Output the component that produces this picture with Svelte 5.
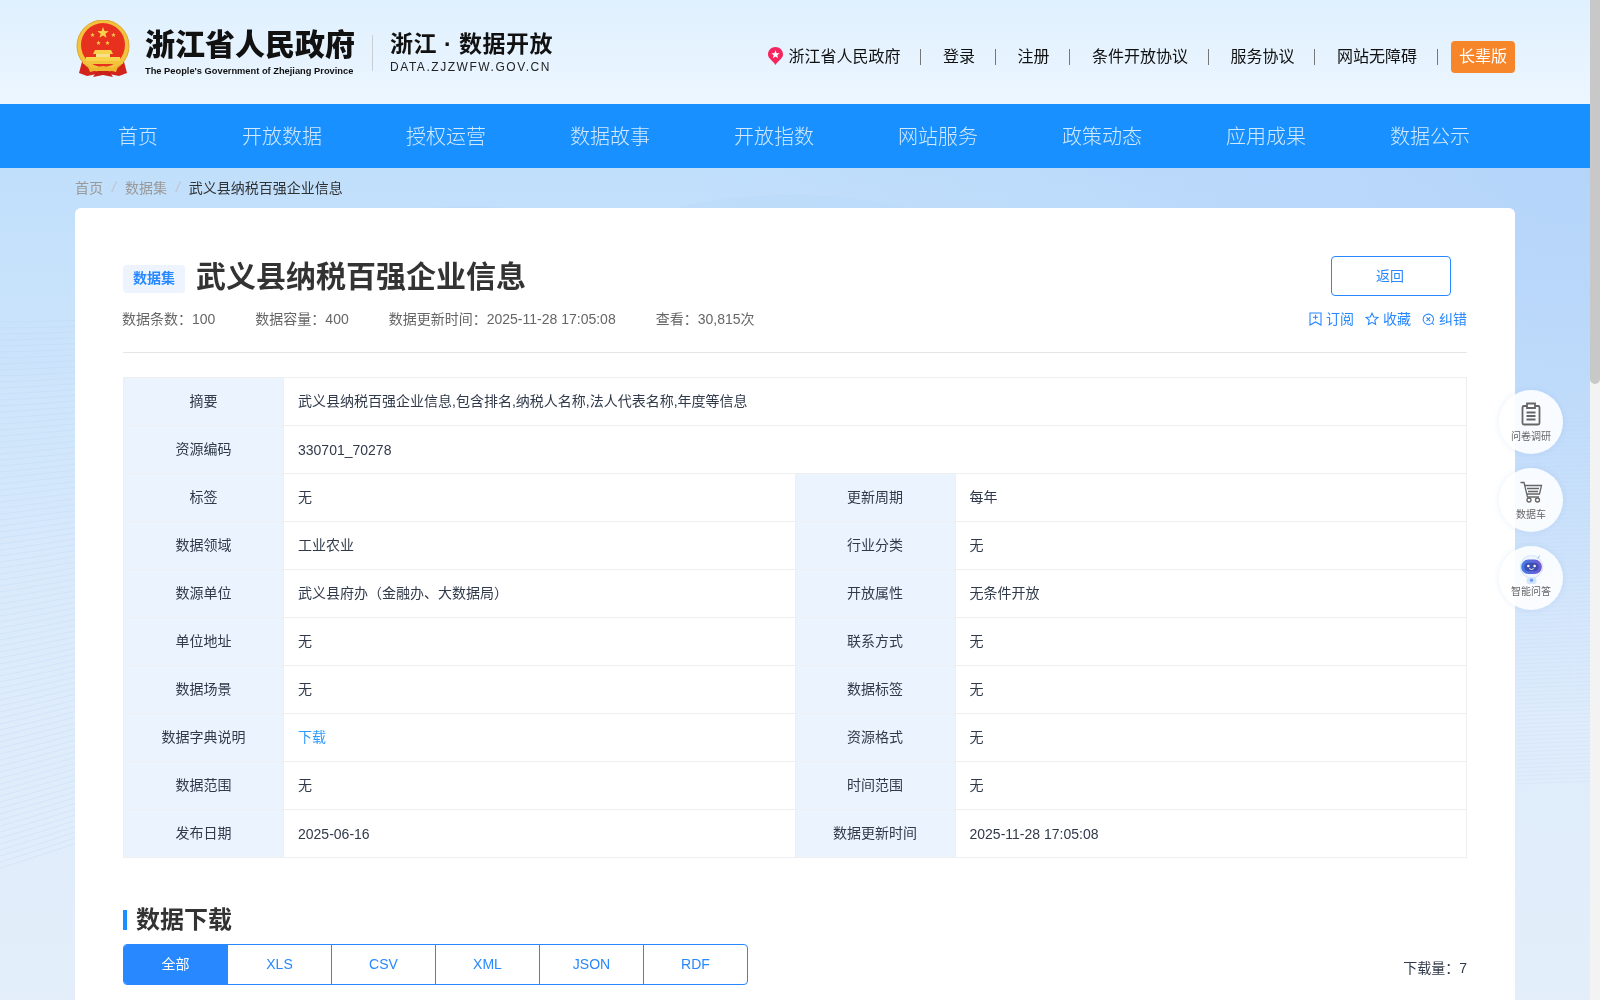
<script>
  const topLinks = ['登录', '注册', '条件开放协议', '服务协议', '网站无障碍'];
  const navItems = ['首页', '开放数据', '授权运营', '数据故事', '开放指数', '网站服务', '政策动态', '应用成果', '数据公示'];
  const rows = [
    ['标签', '无', '更新周期', '每年'],
    ['数据领域', '工业农业', '行业分类', '无'],
    ['数源单位', '武义县府办（金融办、大数据局）', '开放属性', '无条件开放'],
    ['单位地址', '无', '联系方式', '无'],
    ['数据场景', '无', '数据标签', '无'],
    ['数据字典说明', '下载', '资源格式', '无'],
    ['数据范围', '无', '时间范围', '无'],
    ['发布日期', '2025-06-16', '数据更新时间', '2025-11-28 17:05:08']
  ];
  const tabs = ['全部', 'XLS', 'CSV', 'XML', 'JSON', 'RDF'];
  const waves = Array.from({ length: 92 }, (_, i) => i);
  const isLatin = (s) => /^\d/.test(s);
  const star = (cx, cy, r) =>
    Array.from({ length: 10 }, (_, i) => {
      const a = -Math.PI / 2 + (i * Math.PI) / 5;
      const d = i % 2 ? r * 0.42 : r;
      return `${(cx + d * Math.cos(a)).toFixed(2)},${(cy + d * Math.sin(a)).toFixed(2)}`;
    }).join(' ');
</script>

<div class="backdrop" aria-hidden="true">
  <svg viewBox="0 0 1600 1000" width="1600" height="1000" preserveAspectRatio="none">
    {#each waves as i}
      <path d={`M0 ${322 + i * 6} C 30 ${322 + i * 5.9} 60 ${321 + i * 5.8} 90 ${320 + i * 5.7}`} class="w" />
      <path d={`M1515 ${420 + i * 4} C 1540 ${419 + i * 4} 1570 ${418 + i * 4} 1600 ${417 + i * 4}`} class="w r" />
    {/each}
    <ellipse cx="470" cy="236" rx="110" ry="30" class="hill" />
    <ellipse cx="790" cy="245" rx="170" ry="50" class="hill" />
  </svg>
</div>

<div class="page">
  <header class="masthead">
    <div class="wrap top">
      <div class="brand">
        <svg class="emblem" viewBox="0 0 56 58" width="56" height="58">
          <path d="M8 38 L4 53 L12 56 L22 54 L34 54 L44 56 L52 53 L48 38 Z" fill="#d3241c" />
          <circle cx="28" cy="26" r="26" fill="#f3c33d" />
          <circle cx="28" cy="26" r="26" fill="none" stroke="#e0a52a" stroke-width="1" />
          <circle cx="28" cy="25" r="22" fill="#e8301f" />
          <g fill="#f7d24a">
            <polygon points={star(28, 13, 6)} />
            <polygon points={star(17.5, 15, 2.4)} />
            <polygon points={star(38.5, 15, 2.4)} />
            <polygon points={star(23.5, 23, 2.4)} />
            <polygon points={star(32.5, 23, 2.4)} />
          </g>
          <path d="M20 30 H36 L38 34 H18 Z" fill="#f7d24a" />
          <rect x="21" y="34" width="14" height="3" fill="#f7e08a" />
          <rect x="11" y="37" width="34" height="4" fill="#f7d24a" />
          <rect x="8" y="41" width="40" height="3" fill="#f3c33d" />
          <path d="M12 44 C18 50 22 47 28 46 C34 47 38 50 44 44 L41 52 L33 50 L28 54 L23 50 L15 52 Z" fill="#efb92f" />
          <path d="M22 51 L18 57 L28 55 L38 57 L34 51 Z" fill="#c9201a" />
        </svg>
        <div class="gov">
          <div class="gov-cn">浙江省人民政府</div>
          <div class="gov-en">The People's Government of Zhejiang Province</div>
        </div>
        <span class="brand-rule"></span>
        <div class="portal">
          <div class="portal-cn">浙江 · 数据开放</div>
          <div class="portal-en">DATA.ZJZWFW.GOV.CN</div>
        </div>
      </div>
      <nav class="links">
        <svg class="pin" viewBox="0 0 16 19" width="15" height="18">
          <path d="M8 0 C12.4 0 16 3.4 16 7.8 C16 12 11 14 8 19 C5 14 0 12 0 7.8 C0 3.4 3.6 0 8 0 Z" fill="#f5265f" />
          <polygon points="8,3.4 9.2,6.5 12.4,6.5 9.9,8.6 10.8,11.8 8,10 5.2,11.8 6.1,8.6 3.6,6.5 6.8,6.5" fill="#fff" />
        </svg>
        <span class="link region">浙江省人民政府</span>
        {#each topLinks as l}
          <span class="sep"></span>
          <span class="link">{l}</span>
        {/each}
        <span class="sep last"></span>
        <span class="elder">长辈版</span>
      </nav>
    </div>
  </header>

  <div class="nav">
    <div class="wrap nav-in">
      {#each navItems as n}<span>{n}</span>{/each}
    </div>
  </div>

  <div class="wrap">
    <div class="crumbs">
      <span class="c">首页</span><i>/</i><span class="c">数据集</span><i>/</i><span class="cur">武义县纳税百强企业信息</span>
    </div>

    <main class="card">
      <div class="title-row">
        <span class="tag">数据集</span>
        <h1>武义县纳税百强企业信息</h1>
        <button class="back">返回</button>
      </div>
      <div class="meta-row">
        <div class="meta">
          <span>数据条数：100</span>
          <span>数据容量：400</span>
          <span>数据更新时间：2025-11-28 17:05:08</span>
          <span>查看：30,815次</span>
        </div>
        <div class="acts">
          <span>
            <svg viewBox="0 0 13 14" width="13" height="14"><path d="M1 1 H12 V13 L6.5 10 L1 13 Z M4 5.2 H9 M6.5 2.8 V7.6" /></svg>
            订阅
          </span>
          <span>
            <svg viewBox="0 0 14 14" width="14" height="14"><path d="M7 1.2 L8.8 5 L12.8 5.5 L9.8 8.2 L10.6 12.4 L7 10.3 L3.4 12.4 L4.2 8.2 L1.2 5.5 L5.2 5 Z" /></svg>
            收藏
          </span>
          <span>
            <svg viewBox="0 0 14 14" width="13" height="13"><circle cx="6.8" cy="6.8" r="5.6" /><path d="M4.8 4.8 L8.8 8.8 M8.8 4.8 L4.8 8.8 M11 11 L12.8 12.6" /></svg>
            纠错
          </span>
        </div>
      </div>

      <table class="info">
        <colgroup><col class="k" /><col /><col class="k" /><col /></colgroup>
        <tbody>
          <tr><th>摘要</th><td colspan="3">武义县纳税百强企业信息,包含排名,纳税人名称,法人代表名称,年度等信息</td></tr>
          <tr><th>资源编码</th><td colspan="3" class="num">330701_70278</td></tr>
          {#each rows as r}
            <tr>
              <th>{r[0]}</th>
              <td class:dl={r[1] === '下载'} class:num={isLatin(r[1])}>{r[1]}</td>
              <th>{r[2]}</th>
              <td class:num={isLatin(r[3])}>{r[3]}</td>
            </tr>
          {/each}
        </tbody>
      </table>

      <h2>数据下载</h2>
      <div class="dl-row">
        <div class="tabs">
          {#each tabs as t, i}<span class="tab" class:on={i === 0}>{t}</span>{/each}
        </div>
        <span class="count">下载量：7</span>
      </div>
    </main>
  </div>
</div>

<div class="scrollbar" aria-hidden="true"><span></span></div>

<aside class="float">
  <div class="fab">
    <svg viewBox="0 0 24 24" width="24" height="24">
      <path d="M5 4 H19 A1.5 1.5 0 0 1 20.5 5.5 V21 A1.5 1.5 0 0 1 19 22.5 H5 A1.5 1.5 0 0 1 3.5 21 V5.5 A1.5 1.5 0 0 1 5 4 Z" class="ic" />
      <path d="M8 1.5 H16 V6 H8 Z" class="ic fill" />
      <path d="M7.5 10.5 H16.5 M7.5 14 H16.5 M7.5 17.5 H16.5" class="ic" />
    </svg>
    <small>问卷调研</small>
  </div>
  <div class="fab">
    <svg viewBox="0 0 24 24" width="24" height="24">
      <path d="M1.5 2.5 H5 L8.5 17 H20" class="ic thin" />
      <path d="M6 5.5 H22.5 L20.5 14 H8" class="ic thin" />
      <path d="M8 8.5 H20 M9 11.5 H19" class="ic thin" />
      <circle cx="10" cy="20" r="2" class="ic thin" />
      <circle cx="18.5" cy="20" r="2" class="ic thin" />
    </svg>
    <small>数据车</small>
  </div>
  <div class="fab bot">
    <svg viewBox="0 0 30 32" width="27" height="29">
      <defs>
        <linearGradient id="head" x1="0" x2="1" y1="0" y2="0">
          <stop offset="0" stop-color="#3f7fe6" />
          <stop offset="1" stop-color="#7a55d4" />
        </linearGradient>
      </defs>
      <circle cx="15" cy="13" r="12.5" fill="#f1f6fe" stroke="#cfdff8" />
      <rect x="3.5" y="5" width="23" height="16" rx="8" fill="url(#head)" />
      <rect x="7" y="8.5" width="16" height="9.5" rx="4.7" fill="#3c4fb0" />
      <circle cx="11.5" cy="12" r="1.4" fill="#fff" />
      <circle cx="18.5" cy="12" r="1.4" fill="#fff" />
      <path d="M12.5 15 Q15 17 17.5 15" stroke="#fff" fill="none" />
      <path d="M24 0.5 L22 4" stroke="#8cb4f2" />
      <rect x="9.5" y="25" width="11" height="7" rx="3" fill="#d5e4fb" />
      <circle cx="15" cy="28" r="2" fill="#6ea3f2" />
    </svg>
    <small>智能问答</small>
  </div>
</aside>

<style>
  :global(body) {
    margin: 0;
    font-family: "Liberation Sans", "Noto Sans CJK SC", sans-serif;
    color: #303133;
    background-color: #e3eefa;
    background-image:
      radial-gradient(900px 560px at 100% 160px, #b5d4fa 0%, rgba(181, 212, 250, 0) 100%),
      linear-gradient(180deg, #c0dffb 168px, #dcebfb 620px, #e3eefa 1000px);
    background-attachment: fixed;
  }
  .backdrop {
    position: fixed;
    inset: 0;
    pointer-events: none;
  }
  .w {
    fill: none;
    stroke: #b4d2f8;
    stroke-width: 1;
    opacity: 0.25;
  }
  .w.r {
    opacity: 0.15;
  }
  .hill {
    fill: #b6d7f9;
    opacity: 0.35;
  }
  .scrollbar {
    position: fixed;
    top: 0;
    right: 0;
    bottom: 0;
    width: 10px;
    background: #f3f3f3;
  }
  .scrollbar span {
    display: block;
    height: 384px;
    background: #c8c8c8;
    border-radius: 0 0 5px 5px;
  }
  .page {
    position: relative;
    width: calc(100% - 10px);
    min-height: 2604px;
  }
  .wrap {
    width: 1440px;
    margin: 0 auto;
  }
  .masthead {
    height: 104px;
    background: linear-gradient(180deg, #dff0fe, #ecf6ff);
  }
  .top {
    display: flex;
    justify-content: space-between;
    height: 104px;
  }
  .brand {
    display: flex;
    align-items: flex-start;
  }
  .emblem {
    margin-top: 20px;
    flex: none;
  }
  .gov {
    margin: 24px 0 0 14px;
    width: 212px;
  }
  .gov-cn {
    font-size: 30px;
    font-weight: 900;
    line-height: 42px;
    color: #111;
    white-space: nowrap;
  }
  .gov-en {
    font-size: 9.3px;
    font-weight: 700;
    line-height: 12px;
    color: #111;
    white-space: nowrap;
    margin-top: -1px;
  }
  .brand-rule {
    width: 1px;
    height: 36px;
    background: #c8ced4;
    margin: 35px 17px 0 15px;
  }
  .portal {
    margin-top: 28px;
  }
  .portal-cn {
    font-size: 23px;
    font-weight: 700;
    line-height: 32px;
    letter-spacing: 0.5px;
    color: #111;
    white-space: nowrap;
  }
  .portal-en {
    font-size: 12px;
    line-height: 14px;
    letter-spacing: 1.55px;
    color: #222;
    margin-top: 0;
    white-space: nowrap;
  }
  .links {
    display: flex;
    align-items: center;
    height: 32px;
    margin-top: 41px;
    font-size: 16px;
    color: #111;
  }
  .link {
    margin-bottom: 4px;
  }
  .pin {
    margin-right: 5px;
    margin-top: -2px;
  }
  .sep {
    width: 1px;
    height: 16px;
    background: #777;
    margin: 0 21.5px 0 20px;
  }
  .sep.last {
    margin-right: 13px;
  }
  .elder {
    width: 64px;
    height: 32px;
    line-height: 32px;
    text-align: center;
    background: #f7852a;
    color: #fff;
    border-radius: 4px;
  }
  .nav {
    height: 64px;
    background: #1890ff;
  }
  .nav-in {
    box-sizing: border-box;
    display: flex;
    justify-content: space-around;
    align-items: center;
    height: 64px;
    padding: 0 3px 2px 1px;
    font-size: 20px;
    font-weight: 300;
    color: #d2e9ff;
  }
  .crumbs {
    display: flex;
    align-items: center;
    height: 40px;
    padding-bottom: 3px;
    box-sizing: border-box;
    font-size: 14px;
  }
  .crumbs .c {
    color: #999;
  }
  .crumbs i {
    margin: 0 9px;
    color: #c0c4cc;
  }
  .crumbs .cur {
    color: #303133;
  }
  .card {
    box-sizing: border-box;
    min-height: 2356px;
    background: #fff;
    border-radius: 6px;
    padding: 48px;
  }
  .title-row {
    display: flex;
    align-items: center;
    height: 40px;
  }
  .tag {
    width: 62px;
    height: 28px;
    line-height: 27px;
    margin-top: 5px;
    text-align: center;
    font-size: 14px;
    font-weight: 700;
    color: #2888ff;
    background: #edf4fe;
    border-radius: 4px;
  }
  h1 {
    margin: 0 0 4px 11px;
    font-size: 30px;
    font-weight: 700;
    color: #333;
    flex: 1;
    white-space: nowrap;
  }
  .back {
    box-sizing: border-box;
    width: 120px;
    height: 40px;
    margin-right: 16px;
    padding: 0 2px 2px 0;
    background: #fff;
    border: 1px solid #2888ff;
    border-radius: 4px;
    color: #2888ff;
    font: inherit;
    font-size: 14px;
  }
  .meta-row {
    display: flex;
    justify-content: space-between;
    align-items: center;
    height: 24px;
    margin-top: 12px;
    padding-bottom: 20px;
    border-bottom: 1px solid #e6e6e6;
    font-size: 14px;
    line-height: 20px;
  }
  .meta {
    display: flex;
    gap: 40px;
    color: #666;
    margin: -3px 0 0 -1px;
  }
  .acts {
    display: flex;
    gap: 11px;
    color: #2888ff;
    margin-top: -3px;
  }
  .acts span {
    display: flex;
    align-items: center;
    gap: 4px;
  }
  .acts svg {
    fill: none;
    stroke: #2888ff;
    stroke-width: 1.1;
    margin-top: 1px;
  }
  .info {
    width: 100%;
    margin-top: 24px;
    border-collapse: collapse;
    table-layout: fixed;
    font-size: 14px;
  }
  col.k {
    width: 160px;
  }
  .info th,
  .info td {
    box-sizing: border-box;
    height: 48px;
    border: 1px solid #eeeff1;
    padding: 0 0 3px;
  }
  .info th {
    background: #ebf3fe;
    font-weight: 400;
    text-align: center;
    color: #303a4a;
  }
  .info td {
    padding-left: 14px;
    color: #303a4a;
  }
  .info td.num {
    padding-bottom: 0;
  }
  .info td.dl {
    color: #2f9bff;
  }
  h2 {
    position: relative;
    margin: 46px 0 0;
    padding-left: 13px;
    font-size: 24px;
    font-weight: 700;
    line-height: 32px;
    color: #333;
  }
  h2::before {
    content: '';
    position: absolute;
    left: 0;
    top: 6px;
    width: 4px;
    height: 20px;
    background: #1890ff;
  }
  .dl-row {
    display: flex;
    justify-content: space-between;
    align-items: flex-end;
    margin-top: 8px;
  }
  .tabs {
    display: flex;
    border: 1px solid #2888ff;
    border-radius: 4px;
    overflow: hidden;
  }
  .tab {
    box-sizing: border-box;
    width: 104px;
    height: 39px;
    line-height: 39px;
    text-align: center;
    font-size: 14px;
    color: #2888ff;
    border-left: 1px solid #2888ff;
  }
  .tab:first-child {
    border-left: 0;
    width: 103px;
  }
  .tab.on {
    background: #2888ff;
    color: #fff;
  }
  .count {
    font-size: 14px;
    color: #303a4a;
    line-height: 20px;
    margin-bottom: 7px;
  }
  .float {
    position: fixed;
    top: 390px;
    right: 37px;
    display: flex;
    flex-direction: column;
    gap: 14px;
  }
  .fab {
    box-sizing: border-box;
    width: 64px;
    height: 64px;
    border-radius: 50%;
    background: rgba(255, 255, 255, 0.88);
    box-shadow: 0 0 6px rgba(120, 160, 220, 0.18);
    display: flex;
    flex-direction: column;
    align-items: center;
    padding-top: 12px;
    color: #666;
  }
  .fab small {
    font-size: 10px;
    line-height: 12px;
    margin-top: 5px;
    white-space: nowrap;
  }
  .fab.bot {
    padding-top: 9px;
  }
  .fab.bot small {
    margin-top: 2px;
  }
  .ic {
    fill: none;
    stroke: #666;
    stroke-width: 1.8;
  }
  .ic.fill {
    fill: #fff;
  }
  .ic.thin {
    stroke-width: 1.3;
  }
</style>
